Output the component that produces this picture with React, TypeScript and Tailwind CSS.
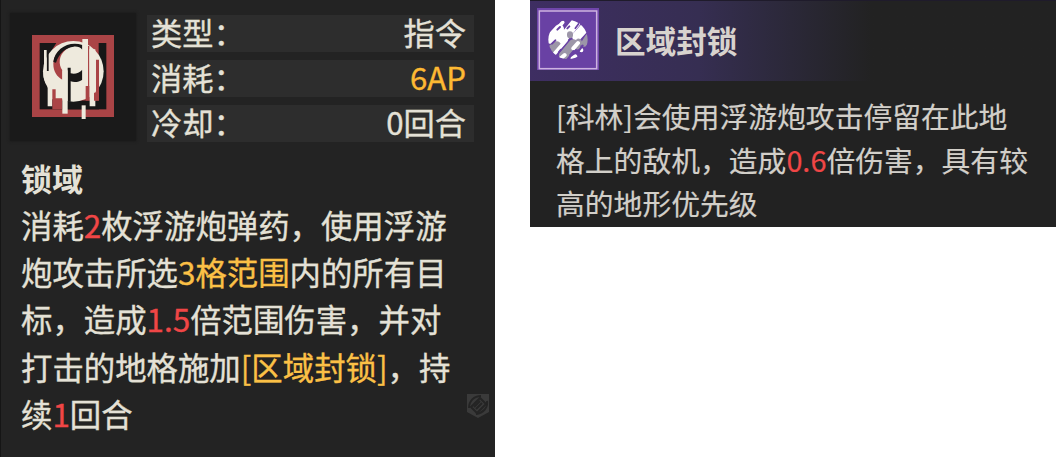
import React from 'react';

const stats = [
  { label: '类型：', value: '指令', color: 'text-[#e4e1d6]' },
  { label: '消耗：', value: '6AP', color: 'text-[#fdb933]' },
  { label: '冷却：', value: '0回合', color: 'text-[#e4e1d6]' },
];

const Red: React.FC<{ children: React.ReactNode }> = ({ children }) => (
  <span className="text-[#f04646]">{children}</span>
);

const Gold: React.FC<{ children: React.ReactNode }> = ({ children }) => (
  <span className="text-[#fbc046]">{children}</span>
);

const SkillIcon: React.FC = () => (
  <svg viewBox="97 107 246 246" className="w-[82px] h-[82px] overflow-visible">
    <rect x="97" y="107" width="246" height="246" fill="#aa4446" />
    <rect x="120" y="131" width="200" height="199" fill="#171717" />
    <path d="M170 131H297V304H185V235H158V150Z" fill="#aa4446" />
    <path d="M204 304H298V330H204Z" fill="#171717" />
    <circle cx="221" cy="216" r="91" fill="#eeeadd" />
    {/* visor: red crescent, dark rim above it, dark notch below */}
    <path d="M215 140C180 145 161 166 161 194C161 216 172 233 188 241V213C176 196 176 168 200 150Z" fill="#aa4446" />
    <path d="M248 137C207 124 166 148 161 188L169 190C178 160 200 144 222 142C234 141 242 144 248 151Z" fill="#171717" />
    <path d="M204 205H213V222C226 226 238 221 248 211V241C238 248 225 250 213 246V307H204Z" fill="#171717" />
    <path d="M141 154H147V215H141Z" fill="#171717" />
    <path d="M133 152H141V215H148V190H156V240H161V266H168V272H188V300H158V321H144V258C131 245 129 225 133 211Z" fill="#eeeadd" />
    <path d="M158 270H168V297H188V330H158Z" fill="#aa4446" />
    <path d="M188 213H204V343H188Z" fill="#eeeadd" />
    <path d="M248 119H265V260H248Z" fill="#eeeadd" />
    <path d="M258 260H270V304H258Z" fill="#aa4446" />
    <path d="M265 140H269V260H265Z" fill="#aa4446" />
    <path d="M269 150H287V321H270V260Z" fill="#eeeadd" />
    <path d="M289 181H298V304H283V280H289Z" fill="#aa4446" />
    <path d="M246 318H258V359H246Z" fill="#eeeadd" />
  </svg>
);

const ZoneIcon: React.FC = () => (
  <svg viewBox="37 23 186 186" className="w-[62px] h-[62px]">
    <defs>
      <clipPath id="orb">
        <circle cx="130" cy="118" r="59" />
      </clipPath>
    </defs>
    <rect x="37" y="23" width="186" height="186" fill="#7046aa" />
    <rect x="44" y="32" width="172" height="173" fill="#6941a4" stroke="#cdb3e0" strokeWidth="4.5" />
    <g clipPath="url(#orb)" strokeLinecap="round" fill="none">
      <path d="M104 128L154 66M76 116L104 86" stroke="#fff" strokeWidth="28" />
      <path d="M156 108L180 82" stroke="#fff" strokeWidth="28" />
      <path d="M116 166L146 130M78 150L96 136" stroke="#9c96a8" strokeWidth="27" />
      <path d="M136 105V102M178 130L190 110M158 138L162 124" stroke="#9c96a8" strokeWidth="18" />
      <path d="M86 164L124 120M102 80L114 66" stroke="#fff" strokeWidth="11" />
      <path d="M106 176L120 164M146 144L160 128M144 174L152 168M170 150V149" stroke="#fff" strokeWidth="12" />
      <path d="M98 88L106 80M82 130L92 120M128 84L134 78M158 158L174 136" stroke="#6941a4" strokeWidth="6" />
      <path d="M102 156L108 148M136 164L146 152M152 84L162 70M74 84L84 78" stroke="#6941a4" strokeWidth="5" />
    </g>
  </svg>
);

const Emblem: React.FC = () => (
  <svg viewBox="0 0 24 26" className="w-6 h-[26px]">
    <path d="M1 1H23V19L12 25L1 19Z" fill="#3a3a3a" />
    <g fill="none" stroke="#242424" strokeWidth="2">
      <path d="M3 15C3 8 8 3 15 3M21 8C22 15 17 20 10 21" />
      <path d="M5 14L14 5L20 11L11 20Z" />
      <path d="M8 14L14 8M10 16L16 10" />
    </g>
  </svg>
);

const SkillPanel: React.FC = () => (
  <section className="flex flex-col w-[495px] h-[457px] bg-[#232323] border-l border-[#151515] text-[#e4e1d6]">
    <div className="flex pt-[13px] pl-[9px] gap-[11px]">
      <div className="flex items-center justify-center w-[126px] h-[128px] bg-[#1a1a1a] shadow-[0_0_3px_#181818] pb-0.5">
        <SkillIcon />
      </div>
      <div className="flex flex-col gap-2 w-[327px] pt-0.5 text-[31.2px] [-webkit-text-stroke:0.35px]">
        {stats.map((stat) => (
          <div key={stat.label} className="flex justify-between h-[37px] pl-1 pr-2 bg-[#2d2d2d] leading-[33px]">
            <span>{stat.label}</span>
            <span className={stat.color}>{stat.value}</span>
          </div>
        ))}
      </div>
    </div>
    <h2 className="pl-5 mt-3 text-[31px] leading-[47px] font-bold">锁域</h2>
    <div className="pl-5 text-[31.4px] leading-[47.2px] whitespace-nowrap [-webkit-text-stroke:0.35px]">
      <p>消耗<Red>2</Red>枚浮游炮弹药，使用浮游</p>
      <p>炮攻击所选<Gold>3格范围</Gold>内的所有目</p>
      <p>标，造成<Red>1.5</Red>倍范围伤害，并对</p>
      <p>打击的地格施加<Gold>[区域封锁]</Gold>，持</p>
      <p>续<Red>1</Red>回合</p>
    </div>
    <div className="flex justify-end -mt-[44px] pr-[5px]">
      <Emblem />
    </div>
  </section>
);

const EffectPanel: React.FC = () => (
  <section className="w-[526px] h-[227px] bg-[#222222] text-[#d2cfc9]">
    <div className="flex items-center h-[81px] pl-[7px] gap-4 border-t border-[#1f1b2b] bg-linear-to-r from-[#3e2e62] via-[#362e52] via-32% to-[#222222] to-65%">
      <div className="pb-1">
        <ZoneIcon />
      </div>
      <h2 className="pb-0.5 text-[30.6px] leading-[46px] font-bold text-[#d8d3ce]">区域封锁</h2>
    </div>
    <div className="pl-[26px] pt-[13px] text-[28.8px] leading-[43.5px] whitespace-nowrap [-webkit-text-stroke:0.2px]">
      <p>[科林]会使用浮游炮攻击停留在此地</p>
      <p>格上的敌机，造成<Red>0.6</Red>倍伤害，具有较</p>
      <p>高的地形优先级</p>
    </div>
  </section>
);

const App: React.FC = () => (
  <main className="flex items-start justify-between w-[1056px] h-[457px] overflow-hidden bg-white font-['Noto_Sans_CJK_SC',sans-serif]">
    <SkillPanel />
    <EffectPanel />
  </main>
);

export default App;
